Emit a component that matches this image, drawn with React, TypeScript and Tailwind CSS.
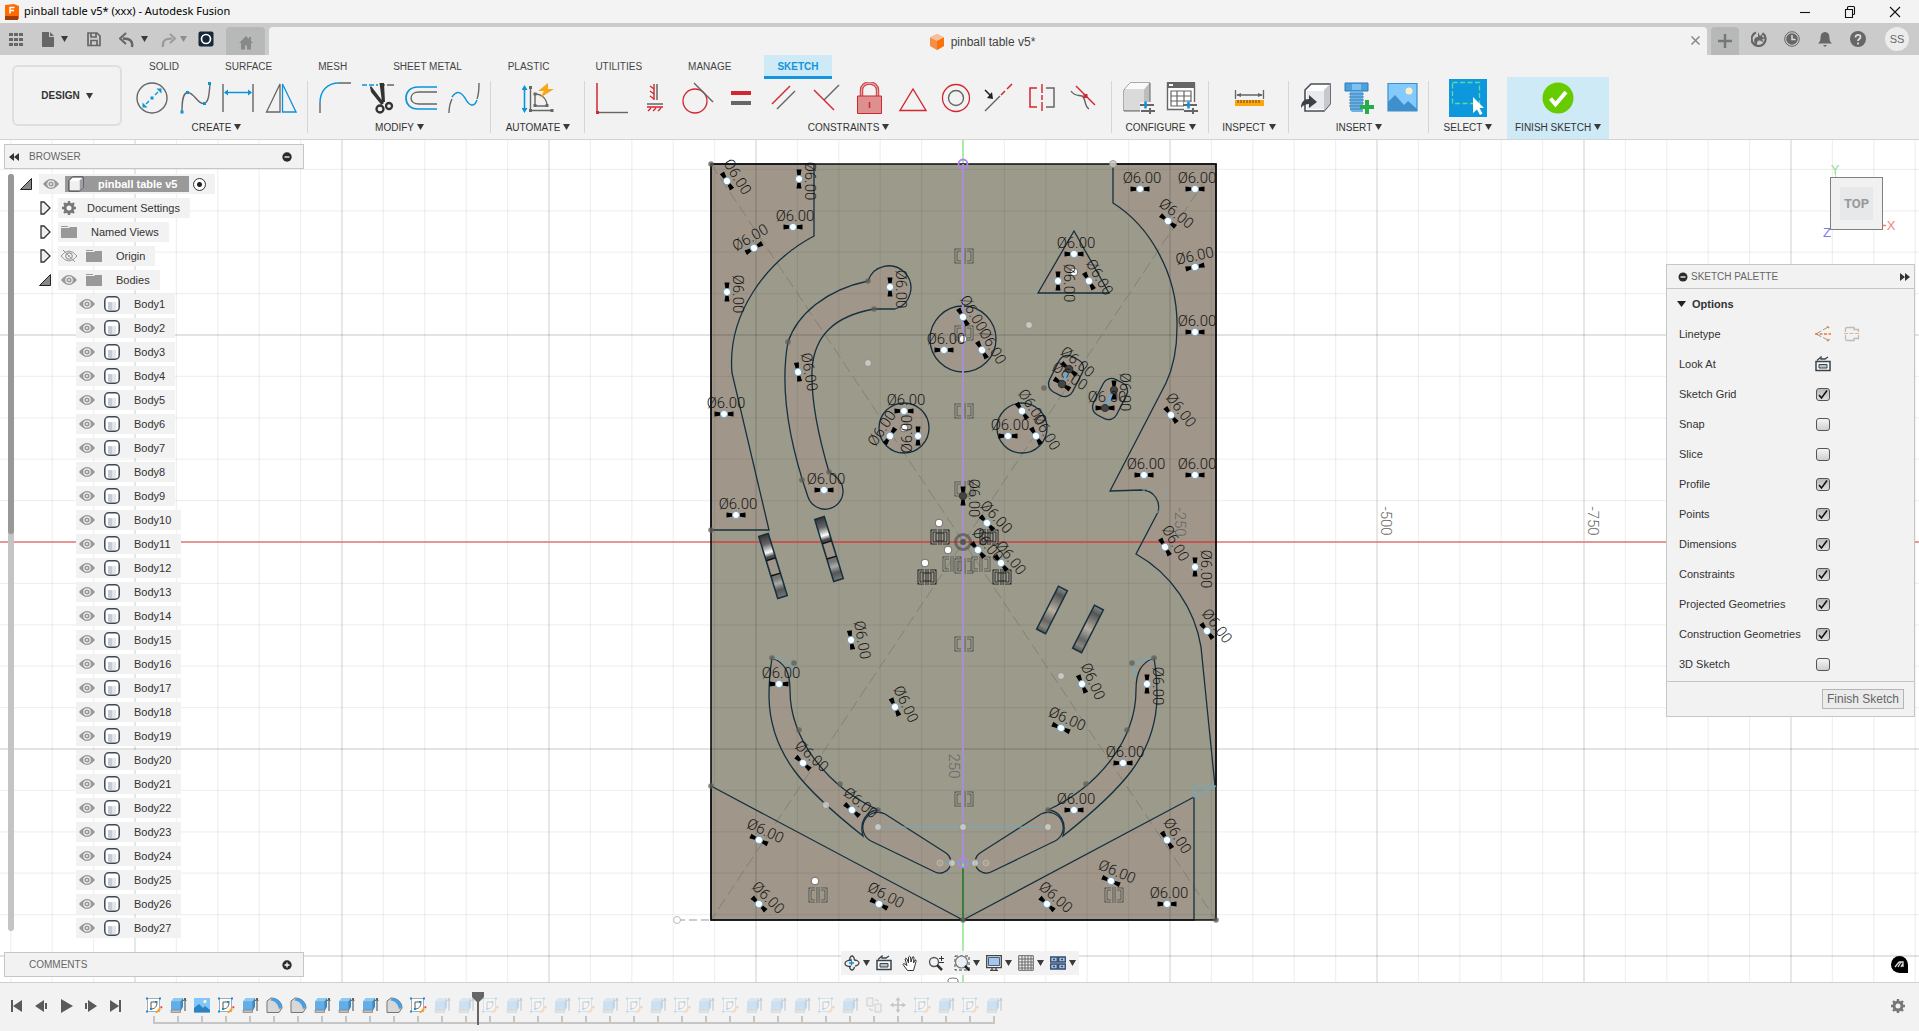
import React from "react";

const GREY = "#666";
const RED = "#d22630";
const BLUE = "#0a94dc";
const NAVY = "#15303f";

/* ---------- small shared pieces ---------- */

function Caret({ light }: { light?: boolean }) {
  return (
    <svg width="7" height="6" viewBox="0 0 7 6" aria-hidden="true">
      <path d="M0 0h7L3.5 6z" fill={light ? "#8d8d8d" : "#3a3a3a"} />
    </svg>
  );
}

function Svg({ s = 16, box, children }: { s?: number; box?: number; children: React.ReactNode }) {
  const b = box ?? s;
  return (
    <svg width={s} height={s} viewBox={`0 0 ${b} ${b}`} fill="none" className="shrink-0" aria-hidden="true">
      {children}
    </svg>
  );
}

/* ---------- ribbon icons, 32 x 32 ---------- */

const ribbonIcons: Record<string, React.ReactNode> = {
  Circle: (
    <>
      <circle cx="16" cy="16" r="15" stroke={GREY} strokeWidth="1.4" />
      <path d="M10 22l3-3M19 13l3-3" stroke={BLUE} strokeWidth="1.4" />
      <path d="M6.500 25.500v-5l5 5zM25.500 6.500h-5l5 5z" fill={BLUE} />
      <rect x="14.500" y="14.500" width="3" height="3" fill={BLUE} />
    </>
  ),
  Spline: (
    <>
      <path d="M3 30C3 18 4 11 8.500 10.500C15 10 19 23 25 21.500C30 20 30 12 31 2" stroke={GREY} strokeWidth="1.4" />
      <path d="M1.500 28.500h3v3h-3zM7 9h3v3H7zM24 20h3v3h-3zM29 0h3v3h-3z" fill={BLUE} />
    </>
  ),
  Dimension: (
    <>
      <path d="M1 2v28M31 2v28" stroke={GREY} strokeWidth="1.4" />
      <path d="M3 10.500h26" stroke={BLUE} strokeWidth="1.5" />
      <path d="M2 10.500l4-3v6zM30 10.500l-4-3v6z" fill={BLUE} />
    </>
  ),
  Mirror: (
    <>
      <path d="M15 2v28H1.500z" stroke={GREY} strokeWidth="1.3" />
      <path d="M17.500 2v28H31z" stroke={BLUE} strokeWidth="1.3" />
    </>
  ),
  Fillet: (
    <>
      <path d="M1 21v10M20 1h12" stroke={GREY} strokeWidth="1.4" />
      <path d="M1 21C1 9 8 1 20 1" stroke={BLUE} strokeWidth="1.4" />
    </>
  ),
  Trim: (
    <>
      <path d="M0 3h16" stroke={BLUE} strokeWidth="1.6" strokeDasharray="5 2" />
      <path d="M20 3h3M25 3h7" stroke={GREY} strokeWidth="1.6" />
      <path d="M17.500 1h4.500l1 19h-3zM8 5l1-1 13 17-2.500 2L9 10z" fill="#333" />
      <circle cx="18" cy="27" r="3.500" stroke="#333" strokeWidth="2.300" />
      <circle cx="27" cy="24" r="3" stroke="#333" strokeWidth="2.300" />
    </>
  ),
  Offset: (
    <>
      <path d="M32 5H13C5 5 1 10 1 16s4 11 12 11h19" stroke={BLUE} strokeWidth="1.7" />
      <path d="M32 10H14c-5 0-8 2.500-8 6s3 6 8 6h18" stroke={GREY} strokeWidth="1.4" />
    </>
  ),
  "Fit curve": (
    <>
      <path d="M1 31C1 26 2 21 4 17M29 17C31 12 31 6 31 1" stroke={GREY} strokeWidth="1.4" />
      <path d="M4 15C9 8 13 10 17 16C21 24 26 26 29 18" stroke={BLUE} strokeWidth="1.5" />
    </>
  ),
  Automate: (
    <>
      <path d="M2.500 6v22" stroke={BLUE} strokeWidth="1.6" />
      <path d="M2.500 3l3 5h-6zM2.500 31l3-5h-6z" fill={BLUE} />
      <path d="M8.500 6v22.500H30M13 12v12h12C25 17 20 12 13 12z" stroke={GREY} strokeWidth="1.400" />
      <path d="M7 4h3v3H7zM7 27h3v3H7zM28.500 27h3v3h-3zM11.500 10.500h3v3h-3zM11.500 22h3v3h-3zM23.500 22h3v3h-3z" fill={GREY} />
      <path d="M26 1L16 9h6l-4 7 14-9h-6z" fill="#f9a61a" />
    </>
  ),
  "Horizontal/Vertical": (
    <>
      <path d="M1 1v29" stroke={RED} strokeWidth="1.500" />
      <path d="M3 30.500h29" stroke={GREY} strokeWidth="1.400" />
      <path d="M0 29h3v3H0z" fill={RED} />
    </>
  ),
  Collinear: (
    <>
      <path d="M15 2v16M8 25h16M9 29l3-3M14 29l3-3M19 29l3-3" stroke={RED} strokeWidth="1.400" />
      <path d="M18 2v16M8 22h16" stroke={GREY} strokeWidth="1.500" />
      <path d="M15 7l-4-3M15 12l-4-3M15 17l-4-3" stroke={RED} strokeWidth="1.200" />
    </>
  ),
  Tangent: (
    <>
      <circle cx="13" cy="19" r="12" stroke={RED} strokeWidth="1.300" />
      <path d="M12 1l19 19" stroke={GREY} strokeWidth="1.400" />
    </>
  ),
  Equal: (
    <>
      <path d="M6 9h20v4H6z" fill={RED} />
      <path d="M6 19h20v4H6z" fill={GREY} />
    </>
  ),
  Parallel: (
    <>
      <path d="M4 22L22 4" stroke={RED} strokeWidth="1.400" />
      <path d="M9 27L27 9" stroke={GREY} strokeWidth="1.400" />
    </>
  ),
  Perpendicular: (
    <>
      <path d="M3 8l20 20" stroke={RED} strokeWidth="1.400" />
      <path d="M13 18L28 3" stroke={GREY} strokeWidth="1.400" />
    </>
  ),
  Fix: (
    <>
      <path d="M7.500 14V8a8 7 0 0 1 16 0v6" stroke="#c93c42" strokeWidth="3.400" />
      <path d="M7.500 14V8a8 7 0 0 1 16 0v6" stroke="#e8a0a0" strokeWidth="1.400" />
      <path d="M3.500 14h24v17.500h-24z" fill="#de8f8f" stroke={RED} />
      <path d="M15.500 20v6" stroke={RED} strokeWidth="1.500" />
    </>
  ),
  Midpoint: <path d="M16 7l13 21.500H3z" stroke={RED} strokeWidth="1.400" />,
  Concentric: (
    <>
      <circle cx="16" cy="16" r="13.500" stroke={RED} strokeWidth="1.300" />
      <circle cx="16" cy="16" r="7.500" stroke={GREY} strokeWidth="1.400" />
    </>
  ),
  Coincident: (
    <>
      <path d="M2 29L17 14" stroke={GREY} strokeWidth="1.500" />
      <path d="M18 13l4-4M24 7l5-5" stroke={RED} strokeWidth="1.500" />
      <path d="M2 8l6 6" stroke="#222" strokeWidth="1.600" />
      <path d="M10 17l-6-1 5-6z" fill="#222" />
    </>
  ),
  Symmetry: (
    <>
      <path d="M11 6H4v19h7" stroke={RED} strokeWidth="1.500" />
      <path d="M20 6h8v19h-8" stroke={GREY} strokeWidth="1.500" />
      <path d="M16 2v28" stroke={RED} strokeWidth="1.400" strokeDasharray="9 2 5 2" />
    </>
  ),
  Curvature: (
    <>
      <path d="M2 9c3 5 7 4 11 5 4 2 2 10 7 13" stroke={GREY} strokeWidth="1.400" />
      <path d="M7 4l19 19" stroke={RED} strokeWidth="1.400" />
      <rect x="14.500" y="12" width="4" height="4" fill={RED} />
    </>
  ),
  Configure: (
    <>
      <path d="M1 8l6-7h20v22l-6 6H1z" fill="#bdbdbd" stroke={GREY} />
      <path d="M1 8h20v20H1z" fill="#dadada" />
      <path d="M1.500 7.500L7 1h19.500L21 7.500z" fill="#fafafa" />
      <path d="M17 20h16v12H20l-3-1z" fill="#f2f2f2" />
      <path d="M17 23h14M18 29h14M27 26v6" stroke={GREY} strokeWidth="2" />
      <path d="M22.500 19.500v7" stroke={BLUE} strokeWidth="2.500" />
    </>
  ),
  Table: (
    <>
      <path d="M1.500 1.500h27v26h-27z" fill="#fff" stroke={GREY} strokeWidth="1.400" />
      <path d="M1 0h28v6H1z" fill={GREY} />
      <path d="M3 2h4v2H3z" fill="#fff" />
      <path d="M5 9h20v15H5zM5 14h20M5 19h20M11 9v15M18 9v15" stroke={GREY} strokeWidth="1.200" />
      <path d="M18 20h16v12H18z" fill="#f2f2f2" />
      <path d="M17 23h14M18 29h14M27 26v6" stroke={GREY} strokeWidth="2" />
      <path d="M22.500 19.500v7" stroke={BLUE} strokeWidth="2.500" />
    </>
  ),
  Measure: (
    <>
      <path d="M2.500 8v9M30.500 8v9M4 13h25" stroke={GREY} strokeWidth="1.300" />
      <path d="M3 13l5-2v4zM30 13l-5-2v4z" fill={GREY} />
      <path d="M2 18h29v6H2z" fill="#fca60c" />
      <path d="M5 18v3M8 18v3M11 18v3M14 18v3M17 18v3M20 18v3M23 18v3M26 18v3" stroke="#5b4a1e" />
    </>
  ),
  "Insert derive": (
    <>
      <path d="M5 8l6-6h19v20l-6 7H5z" fill="#fff" stroke="#4a4f55" strokeWidth="1.600" />
      <path d="M24 8l6-6v20l-6 7z" fill="#c5c8cf" />
      <path d="M7 9h17v18H7z" fill="#e9eaee" />
      <path d="M1 26c0-6 3-9 8-9v-4l8 7-8 6v-4c-3 0-6 1-8 4z" fill="#3b4147" />
    </>
  ),
  "Insert fastener": (
    <>
      <path d="M2 1h23v8H2z" fill="#4ea0dc" stroke="#2f78b5" />
      <path d="M9 2h9v6H9z" fill="#7fc1f0" />
      <path d="M7 9h13v21H9l-2-2z" fill="#6db3e6" />
      <path d="M6 12h15M6 15h15M6 18h15M6 21h15M6 24h15M7 27h12" stroke="#4181b4" />
      <path d="M17 23h5v-5h4v5h5v4h-5v5h-4v-5h-5z" fill="#27ae47" />
    </>
  ),
  Canvas: (
    <>
      <path d="M2 1h29v28H2z" fill="#85cafc" />
      <path d="M2 20l7-7 9 10 4-4 9 8v2H2z" fill="#3e8fcb" />
      <path d="M2 1.500h29v27.500H2z" stroke="#3e8fcb" strokeWidth="1.200" />
      <circle cx="23" cy="9" r="3.500" fill="#fdf0c8" />
    </>
  ),
};

type Group = { label: string; width: string; icons: string[] };
const groups: Group[] = [
  { label: "CREATE", width: "", icons: ["Circle", "Spline", "Dimension", "Mirror"] },
  { label: "MODIFY", width: "", icons: ["Fillet", "Trim", "Offset", "Fit curve"] },
  { label: "AUTOMATE", width: "min-w-[94px]", icons: ["Automate"] },
  {
    label: "CONSTRAINTS",
    width: "",
    icons: ["Horizontal/Vertical", "Collinear", "Tangent", "Equal", "Parallel", "Perpendicular", "Fix", "Midpoint", "Concentric", "Coincident", "Symmetry", "Curvature"],
  },
  { label: "CONFIGURE", width: "", icons: ["Configure", "Table"] },
  { label: "INSPECT", width: "min-w-[80px]", icons: ["Measure"] },
  { label: "INSERT", width: "", icons: ["Insert derive", "Insert fastener", "Canvas"] },
];

function MenuLabel({ children }: { children: React.ReactNode }) {
  return (
    <button className="flex h-5 items-center gap-[3px] whitespace-nowrap px-2 text-[10px] text-[#333]">
      {children}
      <Caret />
    </button>
  );
}

function Ribbon() {
  return (
    <div className="flex h-[85px] border-b border-[#d4d4d4] bg-[#f2f2f2]">
      <button className="ml-3 mt-[10px] flex h-[61px] w-[110px] items-center justify-center gap-[6px] rounded-md border-2 border-[#dedede] bg-[#f2f2f2] text-[10px] font-bold text-[#333]">
        DESIGN
        <Caret />
      </button>
      <div className="ml-[3px] flex flex-col">
        <nav className="ml-[11px] flex h-6 gap-5">
          {["SOLID", "SURFACE", "MESH", "SHEET METAL", "PLASTIC", "UTILITIES", "MANAGE"].map((t) => (
            <button key={t} className="whitespace-nowrap px-[13px] pb-[2px] text-[10px] text-[#444]">
              {t}
            </button>
          ))}
          <button className="border-b-[3px] border-[#1494dc] bg-[#cdeaf6] px-[13px] pt-px text-[10px] font-bold text-[#1494dc]">SKETCH</button>
        </nav>
        <div className="flex flex-1">
          {groups.map((g) => (
            <div
              key={g.label}
              className={`relative flex flex-col items-center pt-[3px] after:absolute after:right-0 after:top-[2px] after:h-[52px] after:w-px after:bg-[#d6d6d6] ${g.width}`}
            >
              <div className="flex gap-[11px] px-[11px]">
                {g.icons.map((n) => (
                  <button key={n} aria-label={n}>
                    <Svg s={32}>{ribbonIcons[n]}</Svg>
                  </button>
                ))}
              </div>
              <div className="mt-[3px]">
                <MenuLabel>{g.label}</MenuLabel>
              </div>
            </div>
          ))}
          <div className="flex w-[78px] flex-col items-center">
            <button aria-label="Select" className="bg-[#0d98de]">
              <Svg s={38}>
                <path d="M3.500 3.500h27v21h-27z" stroke="#5fd7a4" strokeWidth="1.300" strokeDasharray="5 2.500" />
                <path d="M24 18v16l4-3.500 3 5.500 2.500-1.500-3-5.500H35z" fill="#fff" />
              </Svg>
            </button>
            <MenuLabel>SELECT</MenuLabel>
          </div>
          <div className="-mt-[2px] flex flex-col items-center bg-[#cdeaf6] pt-[5px]">
            <button aria-label="Finish Sketch">
              <Svg s={32}>
                <circle cx="16" cy="16" r="15.500" fill="#6c0" />
                <path d="M8.500 16.500l5 6L24 10" stroke="#fff" strokeWidth="4" />
              </Svg>
            </button>
            <div className="mt-[3px]">
              <MenuLabel>FINISH SKETCH</MenuLabel>
            </div>
          </div>
        </div>
      </div>
    </div>
  );
}

/* ---------- title bar and document tabs ---------- */

function TitleBar() {
  return (
    <header className="flex h-[23px] items-center bg-[#f3f3f3] pl-1">
      <Svg s={16}>
        <path d="M1 1l9-1 5 2v13H1z" fill="#ff6b00" />
        <path d="M1 12h13v4H1z" fill="#a33c00" />
        <path d="M6 9.500V3.500h4.500M6 6.500h4" stroke="#fff" strokeWidth="1.500" />
      </Svg>
      <h1 className="ml-1 font-['Noto_Sans','Open_Sans',sans-serif] text-[11px] text-black">pinball table v5* (xxx) - Autodesk Fusion</h1>
      <div className="ml-auto flex gap-[29px] pr-4">
        {[
          ["Minimize", "M3 8.500h10"],
          ["Restore", "M3.500 5.500h7v8h-7zM5.500 5V3.500q0-1 1-1h5q1 0 1 1v6q0 1-1 1h-1"],
          ["Close", "M3 3l10 10M13 3L3 13"],
        ].map(([n, d]) => (
          <button key={n} aria-label={n}>
            <Svg s={16}>
              <path d={d} stroke="#111" strokeWidth="1.100" />
            </Svg>
          </button>
        ))}
      </div>
    </header>
  );
}

function TabBar() {
  return (
    <div className="flex h-8 bg-[#cbcbcb] text-[#666]">
      <div className="flex w-[226px] items-center pl-2">
        <button aria-label="Data panel" className="mr-[15px]">
          <Svg s={16}>
            <path d="M1 2h4v3H1zM6 2h4v3H6zM11 2h4v3h-4zM1 7h4v3H1zM6 7h4v3H6zM11 7h4v3h-4zM1 12h4v3H1zM6 12h4v3H6zM11 12h4v3h-4z" fill="#666" />
          </Svg>
        </button>
        <button aria-label="File" className="mr-[18px] flex items-center gap-[5px]">
          <Svg s={17}>
            <path d="M3 1h7v5h5v10H3zM11 1l4 4h-4z" fill="#666" />
          </Svg>
          <Caret />
        </button>
        <button aria-label="Save" className="mr-[17px]">
          <Svg s={16}>
            <path d="M2 2h9l3 3v9.500H2zM5 2v4h5V2M5 14V9.500h6V14" stroke="#666" strokeWidth="1.700" />
          </Svg>
        </button>
        <button aria-label="Undo" className="mr-3 flex items-center gap-[5px]">
          <Svg s={17}>
            <path d="M13 16c1-6-2-8.500-9-8.500" stroke="#666" strokeWidth="2.400" />
            <path d="M7 2L1 7.500 7 13" stroke="#666" strokeWidth="2" />
          </Svg>
          <Caret />
        </button>
        <button aria-label="Redo" className="mr-[11px] flex items-center gap-[3px]">
          <Svg s={17}>
            <path d="M3 16c-1-6 2-8.500 9-8.500" stroke="#999" strokeWidth="2" />
            <path d="M10 3l5 4.500-5 4.500" stroke="#999" strokeWidth="1.800" />
          </Svg>
          <Caret light />
        </button>
        <button aria-label="Extensions">
          <Svg s={16}>
            <rect x="0.500" y="0.500" width="15" height="15" rx="2" fill="#16273a" />
            <circle cx="8" cy="8" r="4.500" stroke="#fff" strokeWidth="1.700" />
          </Svg>
        </button>
      </div>
      <button aria-label="Home" className="mt-1 flex w-[39px] items-center justify-center rounded-t bg-[#b7b9b8] pt-1">
        <Svg s={16}>
          <path d="M8 1L1 8h2v6.500h4v-4h2v4h4V8h2l-2-2V2h-2v2z" fill="#888" />
        </Svg>
      </button>
      <div className="relative ml-1 mt-1 flex flex-1 items-center rounded-t bg-[#f2f2f2]">
        <div className="flex w-full items-center justify-center gap-[6px] pr-3 pt-[2px] text-[12px] text-[#444]">
          <Svg s={16}>
            <path d="M8 0l7 3.500v8.500L8 16l-7-4V3.500z" fill="#f58f45" />
            <path d="M8 0l7 3.500L8 7 1 3.500z" fill="#f6c09a" />
            <path d="M8 7l7-3.500v8.500L8 16z" fill="#fb7208" />
          </Svg>
          <span>pinball table v5*</span>
        </div>
        <button aria-label="Close document" className="absolute right-[7px] top-[9px]">
          <Svg s={9}>
            <path d="M0.500 0.500l8 8M8.500 0.500l-8 8" stroke="#888" strokeWidth="1.500" />
          </Svg>
        </button>
      </div>
      <button aria-label="New document" className="ml-1 mt-1 flex w-7 items-center justify-center rounded-t bg-[#b7b9b8]">
        <Svg s={14}>
          <path d="M7 0v14M0 7h14" stroke="#777" strokeWidth="2.500" />
        </Svg>
      </button>
      <div className="flex items-center gap-[17px] pl-3 pr-[10px]">
        <button aria-label="Job status">
          <Svg s={16}>
            <path d="M5 1.500A7 7 0 1 0 11.500 2.200" stroke="#666" strokeWidth="2.200" />
            <path d="M4 13c-2-5 0-7 3-7V1l2 4 3-3-1 4 4 1-4 1.500 2 3-4-2c-3 0-3 2-3 4z" fill="#666" />
          </Svg>
        </button>
        <button aria-label="History">
          <Svg s={16}>
            <circle cx="8" cy="8" r="7.300" stroke="#666" strokeWidth="1" />
            <circle cx="8" cy="8" r="5.800" fill="#666" />
            <path d="M8 4v4.500h3.500" stroke="#ddd" strokeWidth="1.500" />
          </Svg>
        </button>
        <button aria-label="Notifications">
          <Svg s={16}>
            <path d="M8 1c3 0 4.500 2 4.500 6 0 3 1 4 2.500 5.500H1C2.500 11 3.500 10 3.500 7c0-4 1.500-6 4.500-6zM6 14h4l-2 2z" fill="#666" />
          </Svg>
        </button>
        <button aria-label="Help" className="mr-[2px]">
          <Svg s={16}>
            <circle cx="8" cy="8" r="8" fill="#666" />
            <path d="M5.500 6.500c0-3.500 5-3.500 5-.5 0 2-2.500 2-2.500 4M8 11.500v2" stroke="#ddd" strokeWidth="1.800" />
          </Svg>
        </button>
        <button className="flex size-6 items-center justify-center rounded-full bg-[#ececec] text-[11px] text-[#666]">SS</button>
      </div>
    </div>
  );
}

/* ---------- model view ---------- */

const CX = 963;
const CY = 542;
const STEP = 41.4;

function GridLines() {
  const out: React.ReactNode[] = [];
  for (let i = -23; i <= 23; i++) {
    const x = CX + i * STEP;
    out.push(<path key={`v${i}`} d={`M${x} 140V982`} strokeOpacity={i % 5 === 0 ? 0.15 : 0.06} />);
  }
  for (let i = -9; i <= 10; i++) {
    const y = CY + i * STEP;
    out.push(<path key={`h${i}`} d={`M0 ${y}H1919`} strokeOpacity={i % 5 === 0 ? 0.15 : 0.06} />);
  }
  return (
    <g stroke="#000" strokeWidth="1.300">
      {out}
    </g>
  );
}

/* x, y, rotation in degrees, solid marker */
const dims: [number, number, number, boolean?][] = [
  [727, 181, 58], [799, 179, 90], [793, 227, 0], [754, 248, -30], [727, 292, 90], [890, 287, 90],
  [798, 372, 80], [724, 414, 0], [736, 515, 0], [824, 490, 0], [944, 350, 0], [963, 317, 60],
  [982, 350, 60], [1140, 189, 0], [1195, 189, 0], [1168, 221, 38], [1195, 267, -12], [1195, 332, 0],
  [1171, 415, 53], [1144, 475, 0], [1195, 475, 0], [1074, 254, 0], [1058, 281, 90], [1089, 281, 60],
  [1069, 369, 40, true], [1062, 384, 34, true], [1114, 390, 90, true], [1105, 408, 0, true],
  [1022, 411, 57], [1036, 436, 60], [1008, 436, 0], [904, 411, 0], [890, 436, -57], [918, 436, -90],
  [963, 496, 90, true], [987, 523, 47], [978, 550, 50], [1001, 563, 52],
  [1165, 547, 60], [1195, 567, 90], [1207, 631, 53], [1082, 684, 66], [1061, 728, 24], [1147, 684, 90],
  [1123, 763, 0], [1074, 810, 0], [1167, 840, 58], [1111, 881, 23], [1047, 904, 42], [1167, 904, 0],
  [851, 640, 80], [895, 707, 65], [779, 684, 0], [803, 763, 42], [852, 810, 40], [759, 840, 25],
  [759, 904, 45], [879, 904, 28],
];

const symmetryMarks: [number, number][] = [
  [964, 256], [964, 333], [964, 411], [964, 489], [964, 644], [964, 799], [818, 895], [1114, 895],
  [952, 564], [964, 566], [981, 564],
];
const heavyMarks: [number, number][] = [[940, 537], [927, 577], [1002, 577], [989, 537]];

function Mark({ x, y, heavy }: { x: number; y: number; heavy?: boolean }) {
  const d = "M-3-6H-8V6H-3M3-6H8V6H3M0-8V8";
  return (
    <g transform={`translate(${x} ${y})`} fill="none">
      <path d={d} stroke={heavy ? "#222" : "#55554f"} strokeWidth="3" />
      <path d={d} stroke="#b3b2a6" strokeWidth="1" />
      {heavy && <path d="M-4-4h8v8h-8z" stroke="#222" />}
    </g>
  );
}

const LEFT_WALL = "M711 164H814V236C765 262 727 315 732 373L769 530H711z";
const RIGHT_WALL =
  "M1113 164V203C1150 226 1178 275 1177 327C1177 348 1174 366 1166 383L1110 491L1142 490C1154 490 1161 502 1158 512L1136 554C1172 574 1195 610 1201 647L1215 786H1216V164z";
const J_LANE =
  "M868 281C825 290 797 315 788 342C781 380 785 430 808 497A18 18 0 0 0 843 490C843 482 836 476 829 472C818 435 811 400 812 370C814 335 835 316 874 309L895 309A22 22 0 1 0 868 281z";
const LOWER_LANE =
  "M772 658C785 663 790 672 790 690C790 738 825 785 878 810C866 811 859 822 863 836C805 790 770 755 769 697C769 680 770 670 772 658z";
const FLIPPER = "M885 814L946 853A11 11 0 0 1 935 872L871 841A15 15 0 0 1 885 814z";
const MIRROR = `matrix(-1 0 0 1 ${CX * 2} 0)`;

function Parts() {
  return (
    <>
      <path d={LEFT_WALL} />
      <path d={RIGHT_WALL} />
      <path d="M711 786L963 920H711z" />
      <path d="M963 920L1194 797V920z" />
      <path d={J_LANE} />
      <path d={LOWER_LANE} />
      <path d={FLIPPER} />
      <g transform={MIRROR}>
        <path d={LOWER_LANE} />
        <path d={FLIPPER} />
      </g>
      <circle cx="963" cy="339" r="33" />
      <circle cx="904" cy="428" r="25" />
      <circle cx="1022" cy="428" r="25" />
      <path d="M1074 231L1109 293H1038z" />
      <rect x="1053" y="356" width="26" height="40" rx="9" transform="rotate(27 1066 376)" />
      <rect x="1097" y="379" width="26" height="40" rx="9" transform="rotate(27 1110 399)" />
    </>
  );
}

function Peg({ x, y, len, rot, id, ticks }: { x: number; y: number; len: number; rot: number; id: string; ticks?: boolean }) {
  return (
    <g transform={`translate(${x} ${y}) rotate(${rot})`}>
      <rect x="-5" y={-len / 2} width="10" height={len} fill={`url(#${id})`} stroke={NAVY} strokeWidth="1.500" />
      {ticks && (
        <>
          <rect x="-4" y="-7" width="8" height="16" fill="#9f978a" />
          <path d="M-5-7H5M-5 9H5" stroke="#111" strokeWidth="1.500" />
        </>
      )}
    </g>
  );
}

function ModelView() {
  return (
    <svg viewBox="0 140 1919 842" preserveAspectRatio="xMidYMid slice" className="absolute inset-0 size-full font-['Liberation_Sans',Arial,sans-serif]" role="img" aria-label="Pinball table sketch, top view">
      <defs>
        <linearGradient id="pegA" x2="0" y2="1">
          <stop offset="0" stopColor="#333" />
          <stop offset=".15" stopColor="#666" />
          <stop offset=".28" stopColor="#fff" />
          <stop offset=".35" stopColor="#444" />
          <stop offset=".7" stopColor="#777" />
          <stop offset=".78" stopColor="#aaa" />
          <stop offset=".88" stopColor="#555" />
          <stop offset="1" stopColor="#777" />
        </linearGradient>
        <linearGradient id="pegB" x2="0" y2="1">
          <stop offset="0" stopColor="#888" />
          <stop offset=".15" stopColor="#555" />
          <stop offset=".5" stopColor="#b5ad9f" />
          <stop offset=".75" stopColor="#666" />
          <stop offset=".88" stopColor="#8a857a" />
          <stop offset="1" stopColor="#555" />
        </linearGradient>
      </defs>
      <path d="M711 164H1216V920H711z" fill="#9c9a8b" />
      <g fill="#a0978a">
        <Parts />
      </g>
      <GridLines />
      <path d="M963 140V982" stroke="#95ee92" strokeWidth="1.500" />
      <path d="M0 542H1919" stroke="#e87c7c" strokeWidth="1.500" />
      <path d="M711 542H1216" stroke="#bd4a45" strokeWidth="1.300" />
      <path d="M711 164L1216 920M1216 164L711 920" stroke="#77766b" strokeOpacity=".7" strokeDasharray="12 5" fill="none" />
      <g fill="none" stroke={NAVY} strokeWidth="1.300">
        <Parts />
      </g>
      <path d="M711 164H1216V920H711z" fill="none" stroke="#0b0b0b" strokeWidth="1.600" />
      <path d="M878 827H1048M940 863H987M1194 797V786H1216zM772 658L794 663L790 676M1154 658L1132 663L1136 676" fill="none" stroke="#6fa9c2" strokeWidth="1.200" />
      <path d="M1142 490H1169L1156 515" fill="none" stroke="#7fa5b0" strokeDasharray="3 2" />
      <path d="M677 920H711" stroke="#999" strokeDasharray="8 4" />
      <circle cx="677" cy="920" r="3.500" fill="#fff" stroke="#bbb" />
      <Peg x={773} y={566} len={65} rot={-17} id="pegA" ticks />
      <Peg x={829} y={549} len={65} rot={-17} id="pegA" ticks />
      <Peg x={1052} y={610} len={48} rot={27} id="pegB" />
      <Peg x={1088} y={629} len={48} rot={27} id="pegB" />

      {symmetryMarks.map(([x, y], i) => (
        <Mark key={i} x={x} y={y} />
      ))}
      {heavyMarks.map(([x, y], i) => (
        <Mark key={i} x={x} y={y} heavy />
      ))}

      <path d="M963 164V863" stroke="#a78fd6" strokeWidth="2" />
      <path d="M963 867V920" stroke="#3d7d38" strokeWidth="2" />
      <circle cx="963" cy="542" r="7.500" fill="none" stroke="#4a4a46" strokeOpacity=".6" strokeWidth="3" />
      <circle cx="963" cy="542" r="3" fill="#555" />
      <g fill="none" stroke="#ad84ee" strokeWidth="1.800">
        <circle cx="963" cy="164" r="4.500" />
        <circle cx="963" cy="863" r="4.500" />
      </g>

      <g fill="#5f5f58" fillOpacity=".75">
        {[[711, 164], [711, 530], [711, 786], [772, 658], [794, 663], [1154, 658], [1132, 663], [1216, 920], [963, 920], [788, 342], [868, 281], [874, 309], [802, 480], [829, 472], [799, 730], [840, 784], [1127, 730], [1086, 784], [878, 810], [1048, 810], [1044, 388]].map(([x, y]) => (
          <circle key={`${x}-${y}`} cx={x} cy={y} r="2.800" />
        ))}
      </g>
      <g fill="#d0cfca" fillOpacity=".85" stroke="#8a8980" strokeWidth=".8">
        {[[868, 363], [1029, 325], [1061, 676], [878, 827], [963, 827], [1048, 827], [952, 863], [975, 863], [826, 805], [1113, 164]].map(([x, y]) => (
          <circle key={`${x}-${y}`} cx={x} cy={y} r="3.500" />
        ))}
      </g>
      <g fill="#aaa394" stroke="#bcb5a8">
        <circle cx="940" cy="863" r="3" />
        <circle cx="986" cy="863" r="3" />
      </g>
      <g fill="#fff" stroke="#555" strokeWidth=".8">
        {[[939, 523], [925, 563], [948, 550], [815, 881], [963, 339], [1074, 272], [904, 428]].map(([x, y]) => (
          <circle key={`${x}-${y}`} cx={x} cy={y} r="3.800" />
        ))}
      </g>

      <g fill="#666" fontSize="15" fontWeight="300" fontFamily="Roboto, 'Liberation Sans', sans-serif" textAnchor="middle">
        {([["-250", 1180, 522], ["-500", 1386, 521], ["-750", 1593, 521], ["250", 954, 766]] as [string, number, number][]).map(([t, x, y]) => (
          <text key={t} transform={`translate(${x} ${y}) rotate(90)`} y="5">
            {t}
          </text>
        ))}
      </g>

      {dims.map(([x, y, r, solid], i) => (
        <g key={i} transform={`translate(${x} ${y}) rotate(${r})`}>
          <path d="M-9.500-2.500L-3-1.500V1.500L-9.500 2.500zM9.500-2.500L3-1.500V1.500L9.500 2.500z" fill="#000" />
          <circle r="3.600" fill={solid ? "#444" : "#fff"} stroke={solid ? "#333" : "#7ba6bf"} />
          <text x="2" y="-6" fontSize="15" fontWeight="300" fontFamily="Roboto, 'Liberation Sans', sans-serif" textAnchor="middle" fill="#161616">
            Ø6.00
          </text>
        </g>
      ))}
      <path d="M1067 373L1064 380M1112 394L1107 404" stroke="#5bb0f0" strokeWidth="2" />
      <path d="M948 982v-2q0-2 5-2t5 2v2" fill="none" stroke="#777" />
    </svg>
  );
}

/* ---------- browser tree ---------- */

function Eye({ off }: { off?: boolean }) {
  return (
    <Svg s={16}>
      <path d="M0 8q8-10 16 0q-8 10-16 0z" fill={off ? "none" : "#989898"} stroke={off ? "#999" : "none"} />
      <circle cx="8" cy="8" r="3.200" stroke={off ? "#999" : "#f2f2f2"} strokeWidth="1.200" />
      <circle cx="8" cy="8" r="1" fill={off ? "#999" : "#f2f2f2"} />
      {off && <path d="M2 2l12 12" stroke="#999" />}
    </Svg>
  );
}
const Folder = () => (
  <Svg s={16}>
    <path d="M0 2h7v1H0zM0 4h8l1-1h7v11H0z" fill="#999" />
  </Svg>
);
const BodyIcon = () => (
  <Svg s={16}>
    <rect x=".8" y=".8" width="14.400" height="14.400" rx="4" fill="#fff" stroke="#3d4955" strokeWidth="1.500" />
    <path d="M4 6h8v8H6l-2-1z" fill="#e3e5e9" />
    <path d="M4 6h4v8H6l-2-1z" fill="#c6cad2" />
  </Svg>
);
const Gear = ({ s = 16, c = "#777" }: { s?: number; c?: string }) => (
  <Svg s={s} box={16}>
    <circle cx="8" cy="8" r="4" stroke={c} strokeWidth="3" />
    <path d="M8 1v3M8 12v3M1 8h3M12 8h3M3 3l2 2M11 11l2 2M13 3l-2 2M5 11l-2 2" stroke={c} strokeWidth="2.400" />
  </Svg>
);
const Collapsed = () => (
  <button aria-label="Expand" className="w-[18px] shrink-0">
    <svg width="11" height="14" viewBox="0 0 11 14">
      <path d="M1 1h3l6 6-6 6H1z" fill="#eee" stroke="#333" strokeWidth="1.300" />
    </svg>
  </button>
);
const Expanded = () => (
  <button aria-label="Collapse" className="w-[19px] shrink-0">
    <svg width="12" height="12" viewBox="0 0 12 12">
      <path d="M11.500 .5v11H.5z" fill="#888" stroke="#222" />
    </svg>
  </button>
);

function PanelHeader({ title, plus }: { title: string; plus?: boolean }) {
  return (
    <div className="flex h-[25px] shrink-0 items-center border border-[#c6c6c6] bg-[#f2f2f2] pr-[11px] text-[10px] text-[#666]">
      <span className="flex w-6 pl-1">
        {!plus && (
          <Svg s={10}>
            <path d="M5 1v8L0 5zM10 1v8L5 5z" fill="#333" />
          </Svg>
        )}
      </span>
      <h2>{title}</h2>
      <button aria-label={plus ? "Expand" : "Minimise"} className="ml-auto">
        <Svg s={10}>
          <circle cx="5" cy="5" r="4.700" fill="#2b2b2b" />
          <path d={plus ? "M2.500 5h5M5 2.500v5" : "M2.500 5h5"} stroke="#fff" strokeWidth="1.300" />
        </Svg>
      </button>
    </div>
  );
}

function Browser() {
  return (
    <aside className="absolute bottom-[5px] left-1 top-1 flex w-[300px] flex-col text-[11px] text-[#333]">
      <PanelHeader title="BROWSER" />
      <div className="flex flex-1">
        <div className="ml-1 mt-[5px] h-[757px] w-[6px] rounded-full bg-[#c4c4c4]">
          <div className="h-[360px] rounded-full bg-[#989898]" />
        </div>
        <ul className="ml-[6px] mt-[3px]">
          <li className="flex h-6 items-center">
            <Expanded />
            <div className="flex h-5 items-center bg-[#f2f2f2] pl-[4px] pr-[9px]">
              <Eye />
              <div className="ml-[6px] mr-1 flex h-4 items-center bg-[#999] pl-[3px] pr-3 font-bold text-white">
                <Svg s={16}>
                  <path d="M1 4.500L4.500 1H15v10.500L11.500 15H1z" fill="#fff" stroke="#333" />
                  <path d="M11.500 4.500L15 1.500v10L11.500 15z" fill="#9a9fa8" />
                  <path d="M2 5h9.500v9H2z" fill="#eef0f2" />
                </Svg>
                <span className="ml-[14px] whitespace-nowrap">pinball table v5</span>
              </div>
              <input type="radio" defaultChecked aria-label="Activate component" className="size-[13px] appearance-none rounded-full border border-[#333] bg-[radial-gradient(circle,#222_2px,#fff_3px)]" />
            </div>
          </li>
          {[
            { name: "Document Settings", pre: <Gear />, gap: "ml-[10px]" },
            { name: "Named Views", pre: <Folder />, gap: "ml-[14px]" },
            { name: "Origin", pre: <><Eye off /><span className="w-[9px]" /><Folder /></>, gap: "ml-[14px]" },
          ].map((r) => (
            <li key={r.name} className="flex h-6 items-center pl-5">
              <Collapsed />
              <div className="flex h-5 items-center bg-[#f2f2f2] pl-[3px] pr-[10px]">
                {r.pre}
                <span className={r.gap}>{r.name}</span>
              </div>
            </li>
          ))}
          <li>
            <div className="flex h-6 items-center pl-[19px]">
              <Expanded />
              <div className="flex h-5 items-center bg-[#f2f2f2] pl-[3px] pr-[10px]">
                <Eye />
                <span className="w-[9px]" />
                <Folder />
                <span className="ml-[14px]">Bodies</span>
              </div>
            </div>
            <ul>
              {Array.from({ length: 27 }, (_, i) => (
                <li key={i} className="flex h-6 items-center pl-14">
                  <div className="flex h-5 items-center bg-[#f2f2f2] pl-[3px] pr-[10px]">
                    <Eye />
                    <span className="w-[9px]" />
                    <BodyIcon />
                    <span className="ml-[14px]">Body{i + 1}</span>
                  </div>
                </li>
              ))}
            </ul>
          </li>
        </ul>
      </div>
      <PanelHeader title="COMMENTS" plus />
    </aside>
  );
}

/* ---------- sketch palette ---------- */

const LookAt = () => (
  <Svg s={16}>
    <path d="M1 5.500h14v9H1z" fill="#f6f7f8" stroke="#3a444d" strokeWidth="1.500" />
    <path d="M4 8.500h8v3.500H4z" fill="#b9c0c4" stroke="#3a444d" />
    <path d="M2 4.500L6 1v2h4l3-2" stroke="#3a444d" strokeWidth="1.300" />
  </Svg>
);

const options: [string, boolean][] = [
  ["Sketch Grid", true], ["Snap", false], ["Slice", false], ["Profile", true], ["Points", true], ["Dimensions", true],
  ["Constraints", true], ["Projected Geometries", true], ["Construction Geometries", true], ["3D Sketch", false],
];

function Palette() {
  return (
    <aside className="absolute right-1 top-[124px] w-[249px] border border-[#c6c6c6] bg-[#f2f2f2] text-[11px] text-[#333]">
      <div className="flex h-6 items-center border-b border-[#c6c6c6] pl-[11px] pr-1 text-[10px] text-[#666]">
        <Svg s={10}>
          <circle cx="5" cy="5" r="4.500" fill="#2b2b2b" />
          <path d="M2.500 5h5" stroke="#fff" strokeWidth="1.300" />
        </Svg>
        <h2 className="ml-[3px]">SKETCH PALETTE</h2>
        <button aria-label="Dock right" className="ml-auto">
          <Svg s={10}>
            <path d="M0 1v8l5-4zM5 1v8l5-4z" fill="#333" />
          </Svg>
        </button>
      </div>
      <h3 className="flex h-[30px] items-center pl-[10px] font-bold">
        <svg width="9" height="6" viewBox="0 0 9 6" className="mr-[6px]">
          <path d="M0 0h9L4.500 6z" fill="#222" />
        </svg>
        Options
      </h3>
      <div className="flex h-[30px] items-center pl-3">
        <span className="w-[136px]">Linetype</span>
        <button aria-label="Construction" className="mr-[13px]">
          <Svg s={16}>
            <path d="M1 8l12-7M1 8l12 6" stroke="#999" strokeDasharray="6 2" />
            <path d="M0 8h16M12 0l3 3M12 15l3-2" stroke="#e87a30" strokeWidth="1.300" strokeDasharray="3 1.500" />
          </Svg>
        </button>
        <button aria-label="Centerline">
          <Svg s={16}>
            <path d="M1.500 6V3q0-1.500 1.500-1.500h7v2h4.500V6M1.500 9v4q0 1.500 1.500 1.500h7v-2h4.500V9" stroke="#bbb" strokeWidth="1.300" />
            <path d="M0 7.500h16" stroke="#f0b080" strokeDasharray="4 1.500" />
          </Svg>
        </button>
      </div>
      <div className="flex h-[30px] items-center pl-3">
        <span className="w-[136px]">Look At</span>
        <button aria-label="Look At">
          <LookAt />
        </button>
      </div>
      {options.map(([name, on]) => (
        <label key={name} className="flex h-[30px] items-center pl-3">
          <span className="w-[137px] whitespace-nowrap">{name}</span>
          <span className="grid">
            <input
              type="checkbox"
              defaultChecked={on}
              className="peer col-start-1 row-start-1 h-[13px] w-[14px] appearance-none rounded-[3px] border border-[#555] bg-linear-to-b from-[#f4f4f4] to-[#d0d0d0] checked:from-[#b9b9b9] checked:to-[#dedede]"
            />
            <svg width="14" height="13" viewBox="0 0 14 13" className="pointer-events-none col-start-1 row-start-1 hidden peer-checked:block" fill="none">
              <path d="M3 7l2.500 3L11 2.500" stroke="#111" strokeWidth="1.500" />
            </svg>
          </span>
        </label>
      ))}
      <div className="mt-[2px] flex h-[35px] items-center justify-end border-t border-[#c6c6c6] pr-[10px]">
        <button className="h-5 border border-[#b5b5b5] bg-[#ebebeb] px-[4px] text-[12px] leading-4 text-[#666]">Finish Sketch</button>
      </div>
    </aside>
  );
}

function ViewCube() {
  return (
    <button aria-label="View cube, top" className="absolute right-[14px] top-[18px]">
      <svg width="90" height="82" viewBox="1815 158 90 82" fontFamily="'Liberation Sans', Arial, sans-serif">
        <rect x="1830.500" y="177.500" width="52" height="52" fill="#f1f1f1" stroke="#808080" />
        <rect x="1840" y="187" width="33" height="33" fill="#e6e8ea" />
        <path d="M1835.500 173v4" stroke="#9be89b" />
        <path d="M1883 225.500h3" stroke="#f77" strokeWidth="1.500" />
        <text x="1856.500" y="208" textAnchor="middle" fontSize="13" fontWeight="bold" fill="#999" fontFamily="Roboto, sans-serif">
          TOP
        </text>
        <g fontSize="13" textAnchor="middle">
          <text x="1835" y="174" fill="#8fe08f">Y</text>
          <text x="1891" y="230" fill="#f58080">X</text>
          <text x="1827" y="237" fill="#7b7bf5">Z</text>
        </g>
      </svg>
    </button>
  );
}

/* ---------- navigation bar ---------- */

const NavIcon: Record<string, React.ReactNode> = {
  Orbit: (
    <>
      <path d="M8 5C4 5 1 6.500 1 8.500s3 3 6 3M10 5c3 0 5 1.500 5 3s-2 3-4 3" stroke="#444" strokeWidth="1.300" />
      <path d="M5.500 5C6 2 7 1 8 1s2 1 2.500 4M5.500 12c.5 2 1.500 3 2.500 3s2-1 2.500-3" stroke="#444" strokeWidth="1.300" />
      <path d="M5 8h5M7.500 6v4.500" stroke={BLUE} strokeWidth="1.400" />
    </>
  ),
  Pan: (
    <path d="M5.500 15.500L1 9.500q0-1.500 2-.5l2 1.500L3 4q.5-1.500 2 0l1.500 4L6.500 2q1-1.500 2 0l.5 5 1.500-5q1.500-1 1.500 1l-.5 5 1.500-3q1.500-.5 1 1.500L12.500 12l-1 3.500z" fill="#fff" stroke="#333" />
  ),
  Zoom: (
    <>
      <circle cx="6" cy="7" r="4.500" fill="#eef4f8" stroke="#555" strokeWidth="1.300" />
      <path d="M9 10l5 5" stroke="#333" strokeWidth="2.500" />
      <path d="M11 3.500h5M13.500 1v5M11 7.500h5" stroke="#333" />
    </>
  ),
  "Zoom window": (
    <>
      <path d="M1 1h14v14H1z" stroke="#444" strokeDasharray="3 2" />
      <circle cx="7.500" cy="7" r="6" fill="#e6f0f5" stroke="#777" strokeWidth="1.200" />
      <path d="M11 11l4.500 4.500" stroke="#222" strokeWidth="2.500" />
    </>
  ),
  Display: (
    <>
      <path d="M.7.700h14.600v12H.7z" fill="#eee" stroke="#444" strokeWidth="1.300" />
      <path d="M2.500 2.500h11v8h-11z" fill="#a8c6ea" stroke="#44618c" />
      <path d="M4 15.300h8M6 13v2M10 13v2" stroke="#444" strokeWidth="1.300" />
    </>
  ),
  Grid: <path d="M.7.700h14.600v14.600H.7zM4 1v14M7 1v14M10 1v14M13 1v14M1 4h14M1 7h14M1 10h14M1 13h14" stroke="#666" fill="#eef2f2" />,
  Viewports: <path d="M.7 2h6.600v5H.7zM8.700 2h6.600v5H8.700zM.7 9h6.600v5H.7zM8.700 9h6.600v5H8.700zM3 4.500h2M11 4.500h2M3 11.500h2M11 11.500h2" fill="#a5c3ea" stroke="#33496b" strokeWidth="1.300" />,
};

function NavBar() {
  const items: [string, boolean][] = [["Orbit", true], ["Look", false], ["Pan", false], ["Zoom", false], ["Zoom window", true], ["Display", true], ["Grid", true], ["Viewports", true]];
  return (
    <div className="absolute bottom-[7px] left-1/2 flex h-6 -translate-x-1/2 items-center gap-[6px] bg-[#f2f2f2] px-[3px]">
      {items.map(([n, caret]) => (
        <button key={n} aria-label={n} className="flex items-center gap-[3px]">
          {n === "Look" ? <LookAt /> : <Svg s={16}>{NavIcon[n]}</Svg>}
          {caret ? <Caret /> : <span className="w-px" />}
        </button>
      ))}
    </div>
  );
}

/* ---------- timeline ---------- */

const features = "SEISEFFEEEFSEESESESESESESEEESECMSESE".split("");

const featureIcons: Record<string, React.ReactNode> = {
  S: (
    <>
      <path d="M1.500 1.500h12v13h-12z" fill="#fff" stroke="#aaa" />
      <path d="M5 11V5h5M6 12c4-1 5-3 5-8" stroke="#555" />
      <path d="M0 .5h2v2H0zM13 .5h2v2h-2zM0 13.500h2v2H0zM9 4h2v2H9zM4 11h2v2H4z" fill={BLUE} />
      <path d="M9 16l4-5 2 1.500-4 3.500z" fill="#f5a623" />
      <path d="M14 10l1-1 1.500 1-.7 1.800z" fill="#e0393e" />
    </>
  ),
  E: (
    <>
      <path d="M1 5l3-4h9v9l-3 5H1z" fill="#3f86bf" />
      <path d="M1 4.500h9.500V13H1z" fill="#63aee8" />
      <path d="M1 4.500L4 1h9l-2.500 3.500z" fill="#8fc9f5" />
      <path d="M1 13h9.500v2.500H1z" fill="#bdbdbd" stroke="#777" strokeWidth=".6" />
      <path d="M15 3v11M13.500 4L15 1l1 3" stroke="#444" />
    </>
  ),
  I: (
    <>
      <path d="M0 1h16v14.500H0z" fill="#7ec6fb" />
      <path d="M0 11l5-4 4 4 2-2 5 4v2.500H0z" fill="#2f82c0" />
      <circle cx="11" cy="4.500" r="1.700" fill="#fdf0c8" />
    </>
  ),
  F: (
    <>
      <path d="M1 15.500V4l4-3c6 0 11 4 11 10l-3 4.500z" fill="#d8d8d8" stroke="#777" />
      <path d="M6 1c6 0 10 4 10 10l-3 1C12 7 9 4 4.500 3.500z" fill="#4b9fe0" />
    </>
  ),
  C: <path d="M1 1h6v8H1zM9 7h6v8H9zM9 3h3v2M4 11v2h3" fill="#eee" stroke="#666" />,
  M: (
    <>
      <path d="M8 2v12M2 8h12" stroke="#444" strokeWidth="1.600" />
      <path d="M8 0l2.500 3.500h-5zM8 16l2.500-3.500h-5zM0 8l3.500-2.500v5zM16 8l-3.500-2.500v5z" fill="#444" />
    </>
  ),
};

const playback: [string, string][] = [
  ["Go to start", "M3 2h2v12H3zM14 2v12L5 8z"],
  ["Step back", "M11 2v12L2 8zM12 5h2v6h-2z"],
  ["Play", "M3 1l12 7L3 15z"],
  ["Step forward", "M2 5h2v6H2zM5 2v12l9-6z"],
  ["Go to end", "M2 2l9 6-9 6zM11 2h2v12h-2z"],
];

function Timeline() {
  return (
    <footer className="relative flex h-[49px] border-t border-[#d0d0d0] bg-[#f2f2f2] pl-2">
      <div className="mt-[15px] flex h-4 gap-[9px]">
        {playback.map(([n, d]) => (
          <button key={n} aria-label={n}>
            <Svg s={16}>
              <path d={d} fill="#5a5a5a" />
            </Svg>
          </button>
        ))}
      </div>
      <div className="relative ml-[18px] mt-[14px]">
        <div className="flex">
          {features.map((f, i) => (
            <button
              key={i}
              aria-label={`Feature ${i + 1}`}
              className="relative flex h-[25px] w-6 justify-center after:absolute after:bottom-0 after:left-[11px] after:h-[6px] after:w-[2px] after:bg-[#c6c6c6]"
            >
              <span className={i > 11 ? "opacity-25" : ""}>
                <Svg s={17} box={17}>{featureIcons[f]}</Svg>
              </span>
            </button>
          ))}
        </div>
        <div className="mx-[11px] h-[2px] bg-[#c6c6c6]" />
        <svg width="12" height="33" viewBox="0 0 12 33" className="absolute -top-[5px] left-[330px]" aria-hidden="true">
          <path d="M0 0h12v5L7 10v23H5V10L0 5z" fill="#666" />
        </svg>
      </div>
      <button aria-label="Timeline settings" className="ml-auto mr-[13px] mt-[15px] self-start">
        <Gear s={16} c="#777" />
      </button>
    </footer>
  );
}

export default function App() {
  return (
    <div className="flex min-h-screen flex-col overflow-hidden bg-[#f2f2f2] font-['Liberation_Sans',Arial,sans-serif]">
      <TitleBar />
      <TabBar />
      <Ribbon />
      <main className="relative min-h-[842px] flex-1 overflow-hidden bg-white">
        <ModelView />
        <Browser />
        <ViewCube />
        <Palette />
        <NavBar />
        <button aria-label="Assistant" className="absolute bottom-[9px] right-[11px]">
          <Svg s={17}>
            <path d="M8.500 0a8.500 8.500 0 0 1 8.500 8.500V17H8.500a8.500 8.500 0 0 1 0-17z" fill="#000" />
            <path d="M4 11l4-5M7 11l3-5M10 11l1.500-3M8 6h4v5" stroke="#ddd" strokeWidth="1.300" />
          </Svg>
        </button>
      </main>
      <Timeline />
    </div>
  );
}
